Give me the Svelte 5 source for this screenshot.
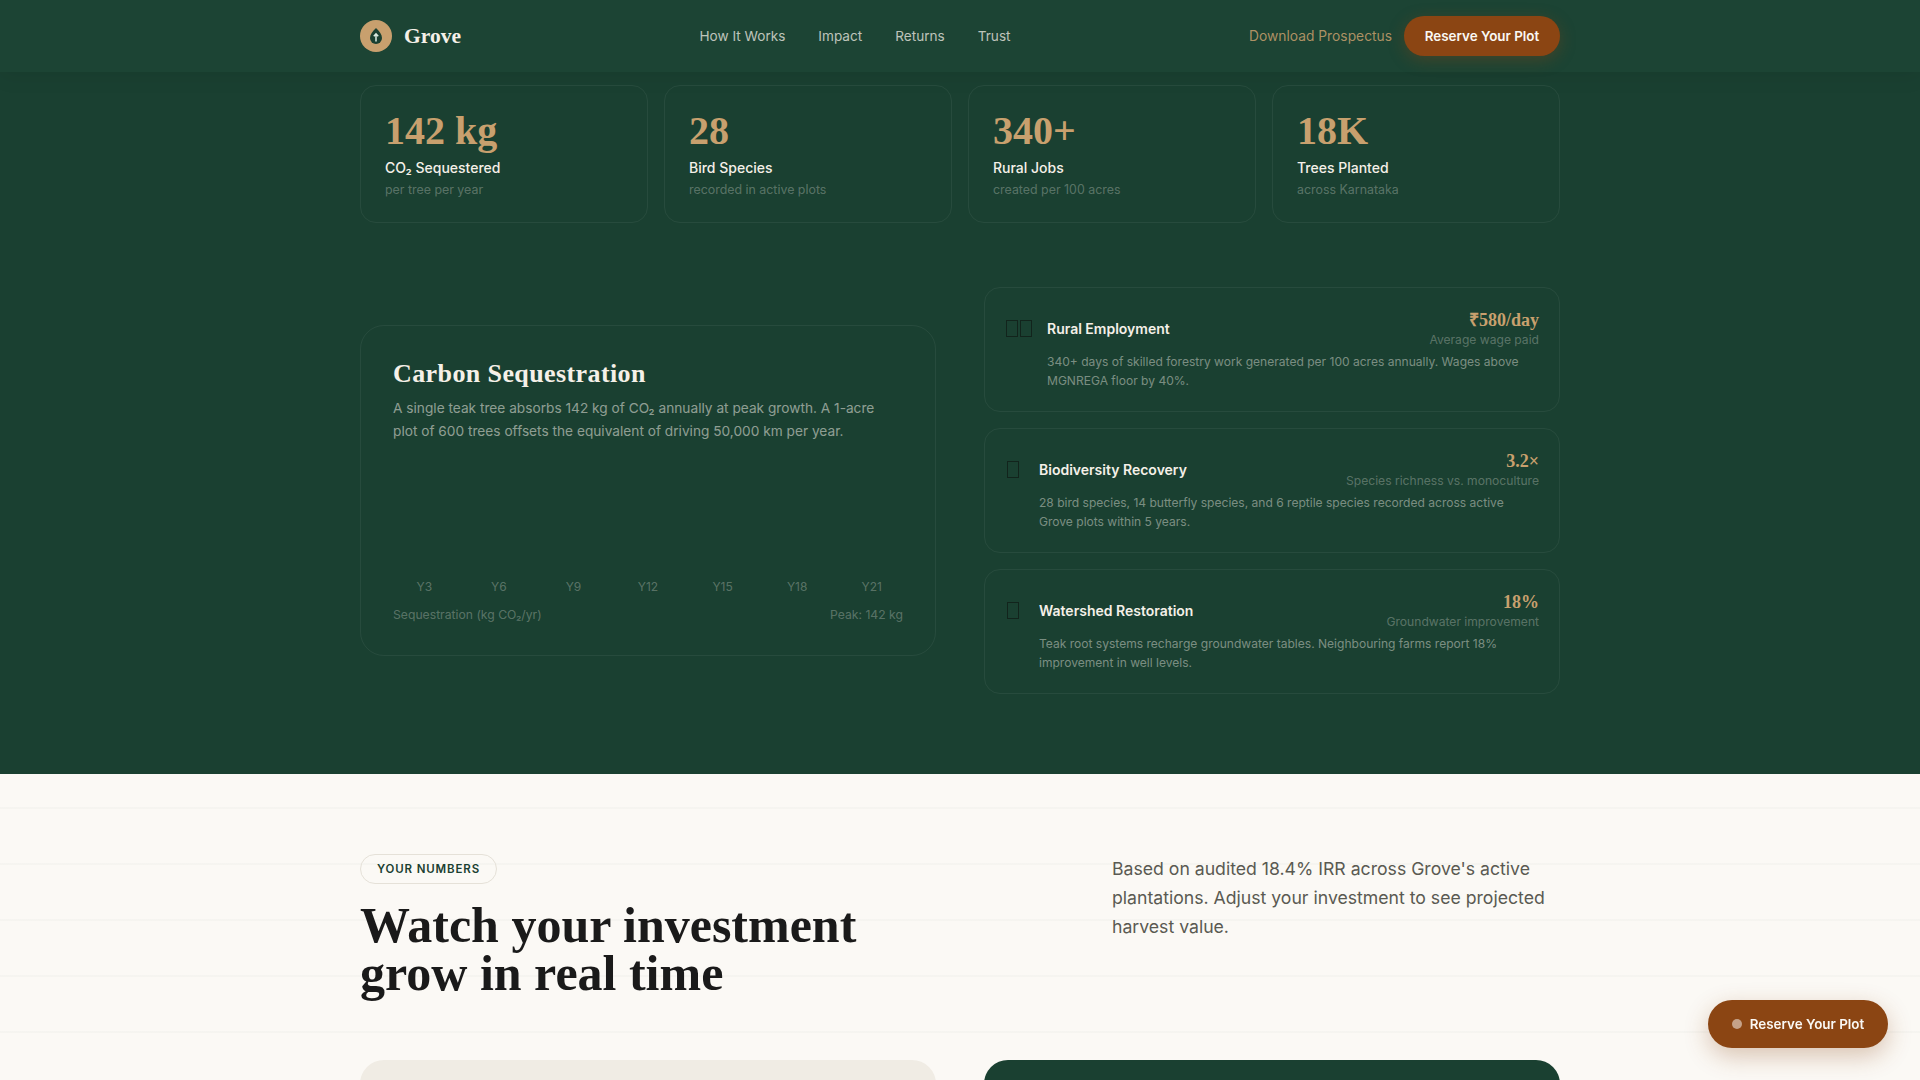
<script lang="ts">
    const links = ["How It Works", "Impact", "Returns", "Trust"];
    const stats = [
        { value: "142 kg", label: "CO₂ Sequestered", sub: "per tree per year" },
        { value: "28", label: "Bird Species", sub: "recorded in active plots" },
        { value: "340+", label: "Rural Jobs", sub: "created per 100 acres" },
        { value: "18K", label: "Trees Planted", sub: "across Karnataka" }
    ];
    const years = ["Y3", "Y6", "Y9", "Y12", "Y15", "Y18", "Y21"];
    const impacts = [
        { boxes: 2, title: "Rural Employment", value: "₹580/day", note: "Average wage paid", text: "340+ days of skilled forestry work generated per 100 acres annually. Wages above MGNREGA floor by 40%." },
        { boxes: 1, title: "Biodiversity Recovery", value: "3.2×", note: "Species richness vs. monoculture", text: "28 bird species, 14 butterfly species, and 6 reptile species recorded across active Grove plots within 5 years." },
        { boxes: 1, title: "Watershed Restoration", value: "18%", note: "Groundwater improvement", text: "Teak root systems recharge groundwater tables. Neighbouring farms report 18% improvement in well levels." }
    ];
</script>

<div class="page">
    <nav class="nav">
        <div class="nav-inner">
            <div class="brand">
                <span class="logo">
                    <svg width="14" height="18" viewBox="0 0 14 18">
                        <path d="M7 1C10.5 4.5 13 7.5 13 11a6 6 0 0 1-12 0C1 7.500 3.500 4.500 7 1Z" fill="#1a4031" />
                        <path d="M7 14.500V7M4.800 9.300 7 6.800l2.200 2.500" fill="none" stroke="#dcebe2" stroke-width="1.500" />
                    </svg>
                </span>
                <span class="brand-name">Grove</span>
            </div>
            <div class="links">
                {#each links as link}
                    <span>{link}</span>
                {/each}
            </div>
            <div class="actions">
                <span class="download">Download Prospectus</span>
                <span class="reserve">Reserve Your Plot</span>
            </div>
        </div>
    </nav>

    <section class="impact">
        <div class="container">
            <div class="stats">
                {#each stats as s}
                    <div class="stat">
                        <div class="stat-value">{s.value}</div>
                        <div class="stat-label">{s.label}</div>
                        <div class="stat-sub">{s.sub}</div>
                    </div>
                {/each}
            </div>

            <div class="split">
                <div class="carbon">
                    <h3>Carbon Sequestration</h3>
                    <p>A single teak tree absorbs 142 kg of CO₂ annually at peak growth. A 1-acre plot of 600 trees offsets the equivalent of driving 50,000 km per year.</p>
                    <div class="years">
                        {#each years as y}
                            <span>{y}</span>
                        {/each}
                    </div>
                    <div class="chart-foot">
                        <span>Sequestration (kg CO₂/yr)</span>
                        <span>Peak: 142 kg</span>
                    </div>
                </div>

                <div class="impact-list">
                    {#each impacts as item}
                        <div class="impact-card">
                            <div class="icon" class:double={item.boxes === 2}>
                                {#each Array(item.boxes) as _}
                                    <i></i>
                                {/each}
                            </div>
                            <div class="impact-body">
                                <div class="impact-head">
                                    <span class="impact-title">{item.title}</span>
                                    <div class="impact-figure">
                                        <div class="impact-value">{item.value}</div>
                                        <div class="impact-note">{item.note}</div>
                                    </div>
                                </div>
                                <p>{item.text}</p>
                            </div>
                        </div>
                    {/each}
                </div>
            </div>
        </div>
    </section>

    <section class="numbers">
        <div class="container">
            <div class="numbers-head">
                <div>
                    <span class="eyebrow">YOUR NUMBERS</span>
                    <h2>Watch your investment<br />grow in real time</h2>
                </div>
                <p>Based on audited 18.4% IRR across Grove's active plantations. Adjust your investment to see projected harvest value.</p>
            </div>
            <div class="calc">
                <div class="calc-left"></div>
                <div class="calc-right"></div>
            </div>
        </div>
    </section>

    <div class="floating"><b></b>Reserve Your Plot</div>
</div>

<style>
    :global(body) { margin: 0; background: #fbf9f5; }
    .page { height: 1080px; overflow: hidden; font-family: Inter, "Noto Sans", sans-serif; position: relative; }
    .container { width: 1200px; margin: 0 auto; }

    .nav { height: 72px; background: #1c4434; box-shadow: 0 4px 20px rgba(0, 0, 0, 0.08); position: relative; z-index: 2; }
    .nav-inner { width: 1200px; height: 100%; margin: 0 auto; display: flex; align-items: center; justify-content: space-between; }
    .brand { display: flex; align-items: center; gap: 12px; }
    .logo { width: 32px; height: 32px; border-radius: 50%; background: #c8a06e; display: flex; align-items: center; justify-content: center; }
    .brand-name { font-family: "Liberation Serif", serif; font-weight: 700; font-size: 21.500px; color: #f5f0e8; }
    .links { display: flex; gap: 33px; margin-top: -1px; font-size: 13.600px; color: rgba(245, 240, 232, 0.75); }
    .actions { display: flex; align-items: center; gap: 12px; }
    .download { margin-top: -1px; font-size: 13.800px; color: rgba(200, 160, 110, 0.85); }
    .reserve { width: 156px; height: 40px; border-radius: 20px; background: #8b4513; color: #faf8f4; font-size: 13.400px; font-weight: 600; display: flex; align-items: center; justify-content: center; box-shadow: 0 4px 16px rgba(139, 69, 19, 0.35); }

    .impact { height: 702px; background: #1a4031; padding-top: 13px; box-sizing: border-box; }
    .stats { display: grid; grid-template-columns: repeat(4, 1fr); gap: 16px; }
    .stat { height: 138px; box-sizing: border-box; padding: 24px; border: 1px solid rgba(255, 255, 255, 0.06); border-radius: 16px; }
    .stat-value { font-family: "Liberation Serif", serif; font-weight: 700; font-size: 40px; line-height: 42px; color: #c8a06e; }
    .stat-label { margin-top: 6px; font-size: 14px; font-weight: 500; line-height: 20px; color: #f5f0e8; }
    .stat-sub { margin-top: 3px; font-size: 12.400px; line-height: 18px; color: rgba(245, 240, 232, 0.3); }

    .split { margin-top: 64px; display: grid; grid-template-columns: 1fr 1fr; gap: 48px; align-items: center; }
    .carbon { box-sizing: border-box; height: 331px; margin-bottom: 1px; padding: 32px; border: 1px solid rgba(255, 255, 255, 0.06); border-radius: 24px; }
    .carbon h3 { margin: 0 0 7px; font-family: "Liberation Serif", serif; font-weight: 700; font-size: 26px; letter-spacing: 0.4px; line-height: 32px; color: #f5f0e8; }
    .carbon p { margin: 0; max-width: 490px; font-size: 13.700px; line-height: 23.500px; color: rgba(245, 240, 232, 0.55); }
    .years { margin-top: 135.500px; display: grid; grid-template-columns: repeat(7, 1fr); gap: 12px; font-size: 12px; line-height: 16px; text-align: center; color: rgba(245, 240, 232, 0.3); }
    .chart-foot { margin-top: 12px; display: flex; justify-content: space-between; font-size: 12.200px; line-height: 16px; color: rgba(245, 240, 232, 0.3); }

    .impact-list { display: flex; flex-direction: column; gap: 16px; }
    .impact-card { display: flex; gap: 12px; box-sizing: border-box; height: 125px; padding: 20px; border: 1px solid rgba(255, 255, 255, 0.06); border-radius: 16px; }
    .icon { width: 22px; height: 40px; display: flex; align-items: center; gap: 2px; flex-shrink: 0; padding-left: 2px; box-sizing: border-box; }
    .icon.double { width: 30px; padding-left: 1px; }
    .icon i { width: 12px; height: 17px; box-sizing: border-box; border: 1px solid #12241c; }
    .impact-body { flex: 1; }
    .impact-head { display: flex; align-items: center; justify-content: space-between; }
    .impact-title { font-size: 14px; font-weight: 600; color: #f5f0e8; }
    .impact-figure { text-align: right; }
    .impact-value { font-family: "Liberation Serif", serif; font-weight: 700; font-size: 18px; line-height: 24px; color: #c8a06e; }
    .impact-note { font-size: 12.100px; line-height: 16px; color: rgba(245, 240, 232, 0.3); }
    .impact-body p { margin: 4px 0 0; font-size: 12.050px; line-height: 19px; color: rgba(245, 240, 232, 0.45); }

    .numbers { height: 306px; padding-top: 80px; box-sizing: border-box; background-color: #fbf9f5; background-image: repeating-linear-gradient(to bottom, transparent 0 54px, rgba(26, 64, 49, 0.025) 54px 56px); background-position: 0 -21px; }
    .numbers-head { display: flex; justify-content: space-between; align-items: flex-start; }
    .eyebrow { display: inline-block; box-sizing: border-box; height: 30px; padding: 0 16px; border: 1px solid #e5e1d8; border-radius: 15px; font-size: 11.500px; font-weight: 600; line-height: 28px; letter-spacing: 0.85px; color: #1a4031; }
    .numbers h2 { margin: 17px 0 0; font-family: "Liberation Serif", serif; font-weight: 700; font-size: 50px; line-height: 48.400px; color: #1a1a1a; }
    .numbers-head p { margin: 0; width: 448px; font-size: 17.650px; line-height: 29px; color: #5a5a52; }
    .calc { margin-top: 62px; display: grid; grid-template-columns: 1fr 1fr; gap: 48px; }
    .calc-left { height: 300px; background: #f0ece4; border-radius: 24px; }
    .calc-right { height: 300px; background: #1a4031; border-radius: 24px; }

    .floating { position: fixed; right: 32px; bottom: 32px; width: 180px; height: 48px; border-radius: 24px; background: #8b4513; color: #faf8f4; font-size: 13.400px; font-weight: 600; display: flex; align-items: center; justify-content: center; gap: 8px; box-shadow: 0 8px 24px rgba(139, 69, 19, 0.3); }
    .floating b { width: 10px; height: 10px; border-radius: 50%; background: rgba(255, 255, 255, 0.5); }
</style>
